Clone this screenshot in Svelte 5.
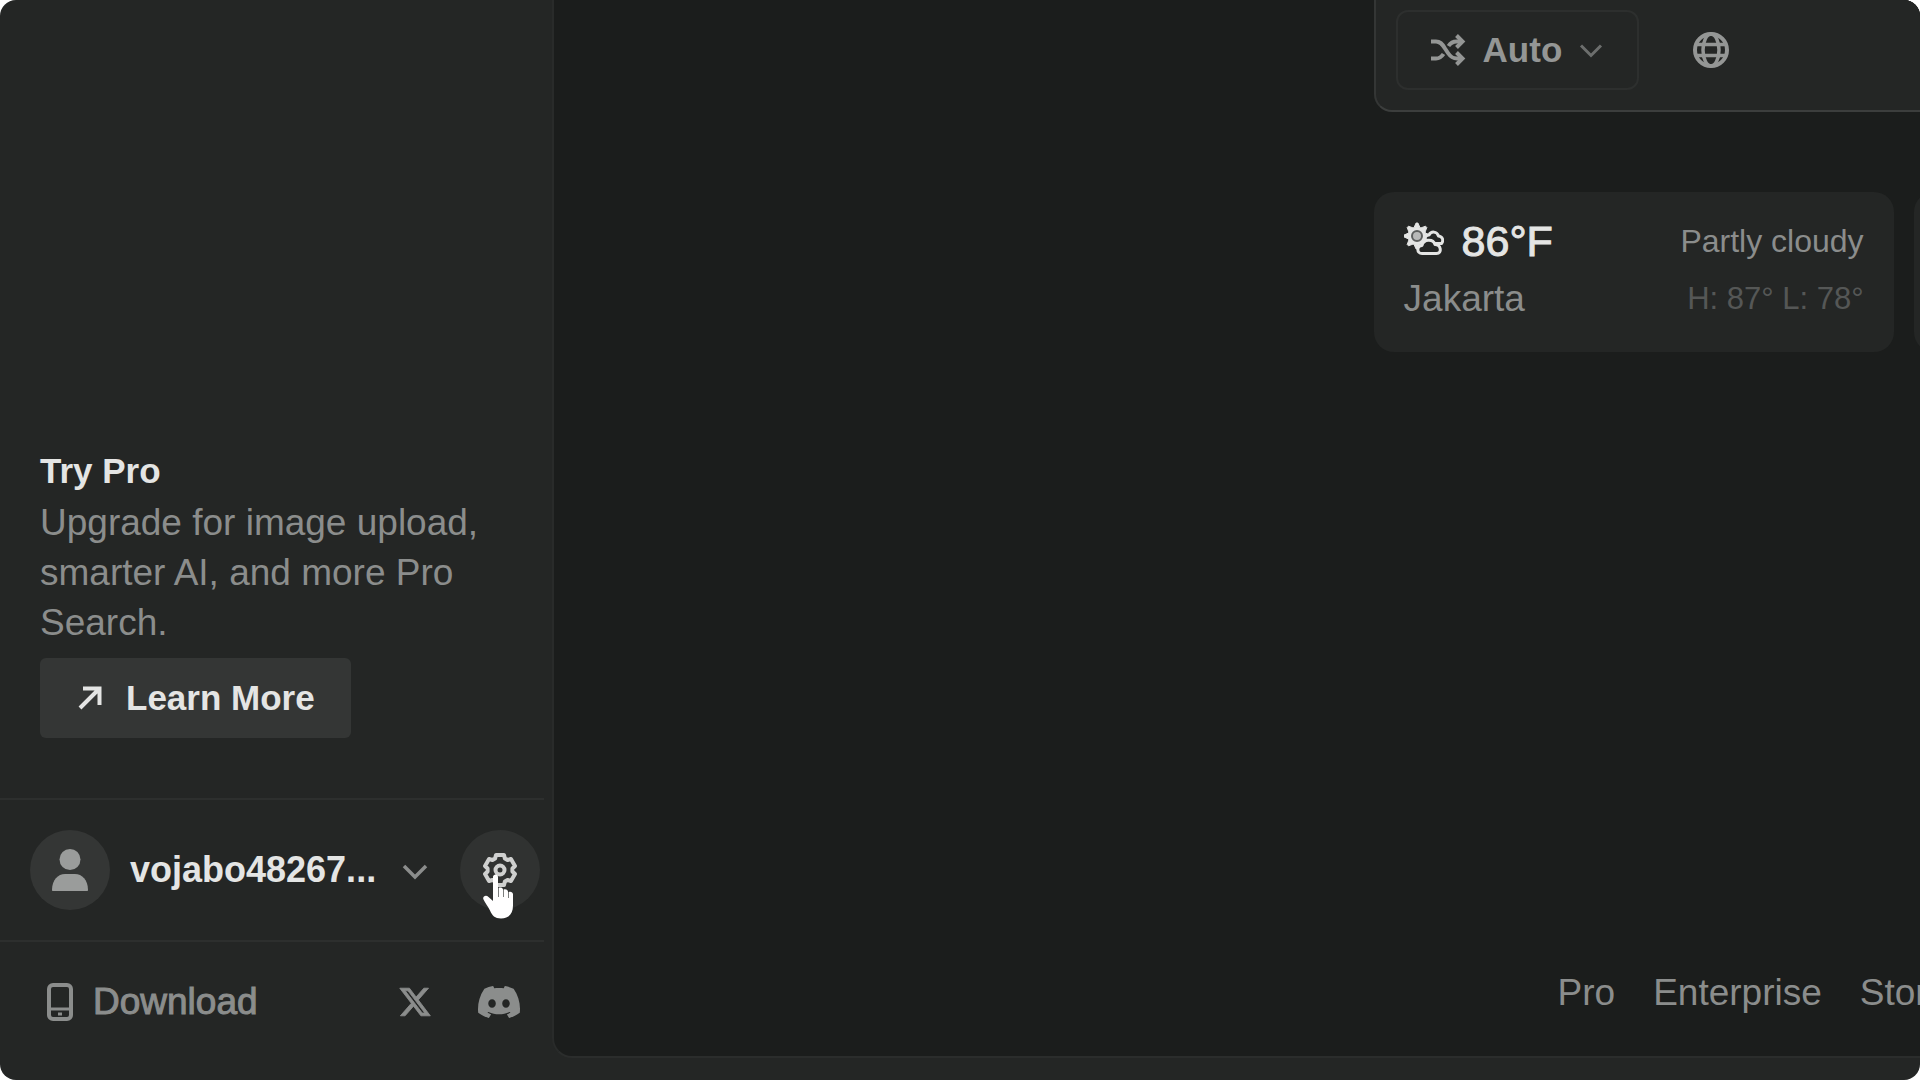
<script>
  const footerLinks = ['Pro', 'Enterprise', 'Store'];

  const user = { name: 'vojabo48267...' };

  const weather = {
    temp: '86°F',
    city: 'Jakarta',
    summary: 'Partly cloudy',
    range: 'H: 87° L: 78°'
  };

  // Build a closed outline with evenly spaced teeth
  function toothPath(cx, cy, teeth, outer, inner, outerHalf, innerHalf) {
    const points = [];
    for (let i = 0; i < teeth; i++) {
      const mid = -90 + (360 / teeth) * i;
      [[-innerHalf, inner], [-outerHalf, outer], [outerHalf, outer], [innerHalf, inner]].forEach(([offset, r]) => {
        const a = ((mid + offset) * Math.PI) / 180;
        points.push(`${(cx + r * Math.cos(a)).toFixed(2)} ${(cy + r * Math.sin(a)).toFixed(2)}`);
      });
    }
    return `M${points.join('L')}Z`;
  }

  const gearPath = toothPath(20, 20, 6, 15.5, 12.5, 15, 23);
  const sunPath = toothPath(13, 14, 8, 13, 9, 4, 19);
</script>

<div class="app">
  <aside class="sidebar">
    <section class="promo">
      <h2>Try Pro</h2>
      <p>Upgrade for image upload, smarter AI, and more Pro Search.</p>
      <button class="learn-more">
        <svg width="24" height="24" viewBox="0 0 24 24" fill="none" stroke="currentColor" stroke-width="4" aria-hidden="true">
          <path d="M2 22L21 3M5 2.500H21.500V19" />
        </svg>
        Learn More
      </button>
    </section>

    <section class="account">
      <button class="user">
        <span class="avatar">
          <svg width="36" height="42" viewBox="0 0 36 42" fill="currentColor" aria-hidden="true">
            <circle cx="18" cy="10.500" r="10.500" />
            <path d="M0 41c0-10 6-16 13-16h10c7 0 13 6 13 16 0 .6-.4 1-1 1H1c-.6 0-1-.4-1-1z" />
          </svg>
        </span>
        <span class="name">{user.name}</span>
        <svg width="26" height="20" viewBox="0 0 26 20" fill="none" stroke="#8b8d8c" stroke-width="3.500" aria-hidden="true">
          <path d="M2 6l11 11L24 6" />
        </svg>
      </button>

      <button class="settings" aria-label="Settings">
        <svg width="40" height="40" viewBox="0 0 40 40" fill="none" stroke="currentColor" stroke-width="4" stroke-linejoin="round" aria-hidden="true">
          <path d={gearPath} />
          <circle cx="20" cy="20" r="4.500" />
        </svg>
        <svg class="pointer" width="36" height="46" viewBox="0 0 36 46" aria-hidden="true">
          <path
            d="M11 3c0-3.500 5-3.500 5 0v12c.5-2 4.500-2 5 .5v1c.8-2 4.500-1.500 5 1v1.500c1-2 5-1.500 5 1.500v11c0 8-4 13-12 13-6 0-9-3-11-8-2-4-5-8-6.500-11-1.500-3 2.500-5 5-2.500L11 27z"
            fill="#fff"
          />
          <path d="M16.500 14v9M21.500 16v7M26.500 18v6" stroke="#7c7e7d" stroke-width="1" />
        </svg>
      </button>
    </section>

    <section class="links">
      <a class="download" href="#download">
        <svg width="26" height="38" viewBox="0 0 26 38" fill="none" stroke="currentColor" stroke-width="4" aria-hidden="true">
          <rect x="2" y="2" width="22" height="34" rx="4" />
          <path d="M2 26h22" stroke-width="3" />
          <path d="M11 31h4" stroke-width="3" />
        </svg>
        Download
      </a>
      <a href="#x" aria-label="X">
        <svg width="34" height="34" viewBox="0 0 24 24" fill="currentColor" stroke="currentColor" stroke-width=".6" aria-hidden="true">
          <path d="M18.244 2.250h3.308l-7.227 8.260 8.502 11.240H16.170l-5.214-6.817L4.990 21.750H1.680l7.730-8.835L1.254 2.250H8.080l4.713 6.231zm-1.161 17.520h1.833L7.084 4.126H5.117z" />
        </svg>
      </a>
      <a href="#discord" aria-label="Discord">
        <svg width="42" height="42" viewBox="0 0 24 24" fill="currentColor" aria-hidden="true">
          <path d="M20.317 4.3698a19.7913 19.7913 0 00-4.8851-1.5152.0741.0741 0 00-.0785.0371c-.211.3753-.4447.8648-.6083 1.2495-1.8447-.2762-3.68-.2762-5.4868 0-.1636-.3933-.4058-.8742-.6177-1.2495a.077.077 0 00-.0785-.037 19.7363 19.7363 0 00-4.8852 1.515.0699.0699 0 00-.0321.0277C.5334 9.0458-.319 13.5799.0992 18.0578a.0824.0824 0 00.0312.0561c2.0528 1.5076 4.0413 2.4228 5.9929 3.0294a.0777.0777 0 00.0842-.0276c.4616-.6304.8731-1.2952 1.226-1.9942a.076.076 0 00-.0416-.1057c-.6528-.2476-1.2743-.5495-1.8722-.8923a.077.077 0 01-.0076-.1277c.1258-.0943.2517-.1923.3718-.2914a.0743.0743 0 01.0776-.0105c3.9278 1.7933 8.18 1.7933 12.0614 0a.0739.0739 0 01.0785.0095c.1202.099.246.1981.3728.2924a.077.077 0 01-.0066.1276 12.2986 12.2986 0 01-1.873.8914.0766.0766 0 00-.0407.1067c.3604.698.7719 1.3628 1.225 1.9932a.076.076 0 00.0842.0286c1.961-.6067 3.9495-1.5219 6.0023-3.0294a.077.077 0 00.0313-.0552c.5004-5.177-.8382-9.6739-3.5485-13.6604a.061.061 0 00-.0312-.0286zM8.02 15.3312c-1.1825 0-2.1569-1.0857-2.1569-2.419 0-1.3332.9555-2.4189 2.157-2.4189 1.2108 0 2.1757 1.0952 2.1568 2.419 0 1.3332-.9555 2.4189-2.1569 2.4189zm7.9748 0c-1.1825 0-2.1569-1.0857-2.1569-2.419 0-1.3332.9554-2.4189 2.1569-2.4189 1.2108 0 2.1757 1.0952 2.1568 2.419 0 1.3332-.946 2.4189-2.1568 2.4189Z" />
        </svg>
      </a>
    </section>
  </aside>

  <main class="main">
    <div class="content">
      <div class="composer">
        <button class="mode">
          <svg width="36" height="36" viewBox="0 0 36 36" fill="none" stroke="currentColor" stroke-width="4" aria-hidden="true">
            <path d="M1 9.500h5c4 0 6 2 9 7l3 4.500c3 4.500 5 5.500 9 5.500h5" />
            <path d="M1 26.500h5c3.500 0 5.500-1.500 7.500-4.500" />
            <path d="M18.500 14c2-3 4.500-4.500 8-4.500H32" />
            <path d="M26.500 3.500l6 6-6 6M26.500 20.500l6 6-6 6" />
          </svg>
          Auto
          <svg class="chevron" width="24" height="15" viewBox="0 0 24 15" fill="none" stroke="currentColor" stroke-width="3" aria-hidden="true">
            <path d="M2 2.500l10 10 10-10" />
          </svg>
        </button>
        <button class="globe" aria-label="Sources">
          <svg width="38" height="38" viewBox="0 0 38 38" fill="none" stroke="currentColor" stroke-width="4" aria-hidden="true">
            <circle cx="19" cy="19" r="16" />
            <ellipse cx="19" cy="19" rx="8" ry="16" stroke-width="3.500" />
            <path d="M4 13.500h30M4 24.500h30" stroke-width="3.500" />
          </svg>
        </button>
      </div>

      <div class="cards">
        <article class="card">
          <div class="row">
            <svg width="40" height="38" viewBox="0 0 40 38" aria-hidden="true">
              <path d={sunPath} fill="currentColor" stroke="currentColor" stroke-width="1" />
              <circle cx="13" cy="14" r="5" fill="#b8b9b8" stroke="#5c5e5d" stroke-width="2" />
              <path class="cloud" d="M21 17c0-3 2-4 4-4 2-4 8-4 9.500 1 4 .5 5.500 4.500 3 7.500H27z" />
              <path class="cloud" d="M18 31.500c-5.500 0-5.500-7.500 0-8 1.500-6.500 11-7 13-1 6 0 7.500 9 1.500 9z" />
            </svg>
            <strong class="temp">{weather.temp}</strong>
            <span class="summary">{weather.summary}</span>
          </div>
          <div class="row">
            <span class="city">{weather.city}</span>
            <span class="range">{weather.range}</span>
          </div>
        </article>
        <article class="card"></article>
      </div>
    </div>

    <nav class="footer">
      {#each footerLinks as link}
        <a href="#{link.toLowerCase()}">{link}</a>
      {/each}
    </nav>
  </main>
</div>

<style>
  :global(body) {
    background: #fff;
    overflow: hidden;
  }

  .app {
    display: flex;
    min-height: 100vh;
    overflow: hidden;
    border-radius: 16px;
    background: #242625;
    color: #8b8d8c;
    font-family: 'Liberation Sans', Arial, sans-serif;
    font-size: 37px;
    line-height: 50px;
  }

  button {
    display: flex;
    align-items: center;
    margin: 0;
    padding: 0;
    border: 0;
    background: none;
    color: inherit;
    font: inherit;
    cursor: pointer;
  }

  a {
    color: inherit;
    text-decoration: none;
  }

  svg {
    display: block;
    flex: none;
  }

  /* Sidebar */
  .sidebar {
    display: flex;
    flex: none;
    flex-direction: column;
    justify-content: flex-end;
    box-sizing: border-box;
    width: 552px;
    padding: 0 8px 18px 0;
  }

  .promo {
    padding: 0 40px 60px;
  }

  .promo h2 {
    margin: 0 0 2px;
    color: #e4e5e4;
    font-size: 35px;
    font-weight: 700;
  }

  .promo p {
    margin: 0 0 10px;
  }

  .learn-more {
    gap: 24px;
    height: 80px;
    padding: 0 36px 0 38px;
    border-radius: 6px;
    background: #343635;
    color: #e4e5e4;
    font-size: 35px;
    font-weight: 700;
  }

  .account {
    display: flex;
    align-items: center;
    justify-content: space-between;
    height: 140px;
    padding: 0 4px 0 30px;
    border-top: 2px solid #2d2f2e;
    border-bottom: 2px solid #2d2f2e;
  }

  .avatar {
    display: flex;
    align-items: center;
    justify-content: center;
    width: 80px;
    height: 80px;
    margin-right: 20px;
    border-radius: 50%;
    background: #343635;
    color: #9a9c9b;
  }

  .name {
    margin-right: 26px;
    color: #e4e5e4;
    font-size: 36px;
    font-weight: 700;
  }

  .settings {
    position: relative;
    justify-content: center;
    width: 80px;
    height: 80px;
    border-radius: 50%;
    background: #303231;
    color: #cfd0cf;
  }

  .pointer {
    position: absolute;
    top: 44px;
    left: 22px;
  }

  .links {
    display: flex;
    align-items: center;
    gap: 46px;
    height: 120px;
    padding: 0 24px 0 47px;
  }

  .download {
    display: flex;
    align-items: center;
    gap: 20px;
    margin-right: auto;
    -webkit-text-stroke: 1px currentColor;
  }

  /* Main panel */
  .main {
    display: flex;
    flex: 1;
    flex-direction: column;
    justify-content: space-between;
    min-width: 0;
    margin-bottom: 22px;
    overflow: hidden;
    border-bottom: 2px solid #2b2d2c;
    border-left: 2px solid #292b2a;
    border-bottom-left-radius: 20px;
    background: #1b1d1c;
  }

  .content {
    padding-left: 60%;
  }

  .composer {
    display: flex;
    gap: 32px;
    padding: 10px 20px 20px;
    border-bottom: 2px solid #3c3e3d;
    border-left: 2px solid #343635;
    border-bottom-left-radius: 18px;
    background: #242625;
  }

  .mode {
    box-sizing: border-box;
    gap: 17px;
    height: 80px;
    padding: 0 34px 0 32px;
    border: 2px solid #2d2f2e;
    border-radius: 12px;
    color: #949695;
    font-size: 35px;
    font-weight: 700;
  }

  .mode .chevron {
    color: #6c6e6d;
  }

  .globe {
    justify-content: center;
    width: 80px;
    height: 80px;
    color: #949695;
  }

  .cards {
    display: flex;
    gap: 20px;
    margin-top: 80px;
  }

  .card {
    flex: none;
    box-sizing: border-box;
    width: 520px;
    min-height: 160px;
    padding: 20px 30px 24px;
    border-radius: 20px;
    background: #242625;
  }

  .row {
    display: flex;
    align-items: center;
    justify-content: space-between;
    height: 58px;
    color: #e4e5e4;
  }

  .cloud {
    fill: #242625;
    stroke: currentColor;
    stroke-width: 3px;
    stroke-linejoin: round;
  }

  .temp {
    margin: 0 auto 0 18px;
    font-size: 43px;
    font-weight: 400;
    -webkit-text-stroke: 1px currentColor;
  }

  .summary {
    color: #8b8d8c;
    font-size: 32px;
  }

  .city {
    color: #8b8d8c;
  }

  .range {
    color: #555756;
    font-size: 31px;
  }

  .footer {
    display: flex;
    gap: 38px;
    padding: 0 0 38px calc(60% + 184px);
  }
</style>
